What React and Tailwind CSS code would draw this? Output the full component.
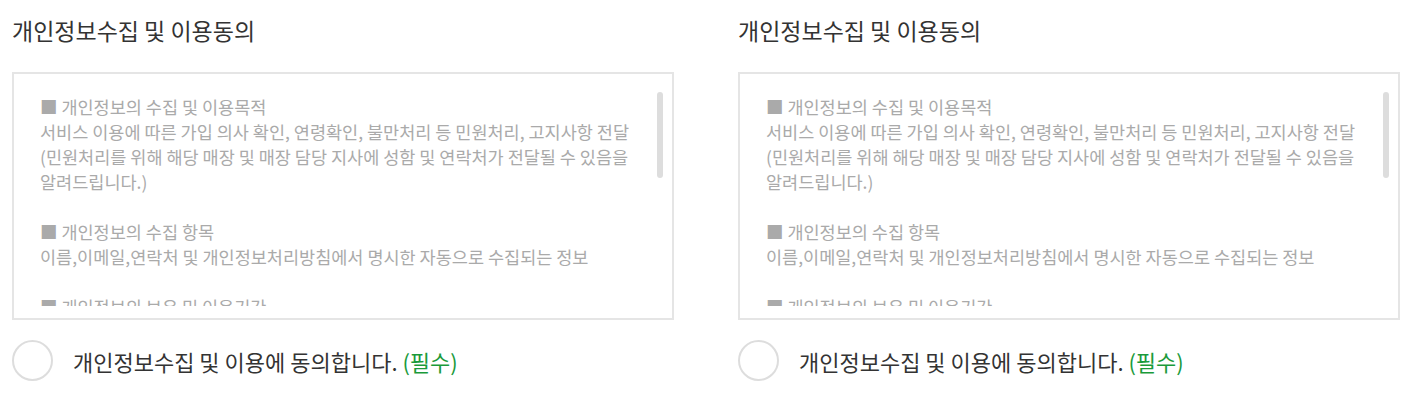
const sections = [
  {
    title: '■ 개인정보의 수집 및 이용목적',
    body: [
      '서비스 이용에 따른 가입 의사 확인, 연령확인, 불만처리 등 민원처리, 고지사항 전달',
      '(민원처리를 위해 해당 매장 및 매장 담당 지사에 성함 및 연락처가 전달될 수 있음을',
      '알려드립니다.)',
    ],
  },
  {
    title: '■ 개인정보의 수집 항목',
    body: ['이름,이메일,연락처 및 개인정보처리방침에서 명시한 자동으로 수집되는 정보'],
  },
  {
    title: '■ 개인정보의 보유 및 이용기간',
    body: ['회원 탈퇴 시 또는 개인정보 수집 및 이용목적 달성 시까지'],
  },
];

const AgreeBlock = () => (
  <div className="w-[662px]">
    <h2 className="pt-[15px] text-[23px] leading-[30px] font-normal text-[#333]">개인정보수집 및 이용동의</h2>

    {/* terms box */}
    <div className="relative mt-[27px] h-[248px] border-2 border-[#e5e5e5] bg-white">
      <div className="absolute left-0 right-0 top-[16px] bottom-[12px] overflow-hidden px-[26px] pt-[4px] text-[17.5px] leading-[25px] text-[#aaa] whitespace-nowrap">
        {sections.map((s, i) => (
          <div key={i} className={i > 0 ? 'mt-[25px]' : ''}>
            <p>{s.title}</p>
            {s.body.map((line, j) => (
              <p key={j}>{line}</p>
            ))}
          </div>
        ))}
      </div>
      <div className="absolute right-[9px] top-[18px] h-[86px] w-[6px] rounded-full bg-[#ddd]" />
    </div>

    <label className="mt-[20px] flex items-center gap-[20px]">
      <span className="h-[41px] w-[41px] shrink-0 rounded-full border-2 border-[#ddd] bg-white" />
      <span className="text-[22px] leading-[30px] text-[#333]">
        개인정보수집 및 이용에 동의합니다. <span className="text-[#1a9a3a]">(필수)</span>
      </span>
    </label>
  </div>
);

export default function App() {
  return (
    <div className="flex min-h-[413px] gap-[64px] bg-white pl-[12px] font-['Noto_Sans_CJK_KR','Noto_Sans',sans-serif]">
      <AgreeBlock />
      <AgreeBlock />
    </div>
  );
}
